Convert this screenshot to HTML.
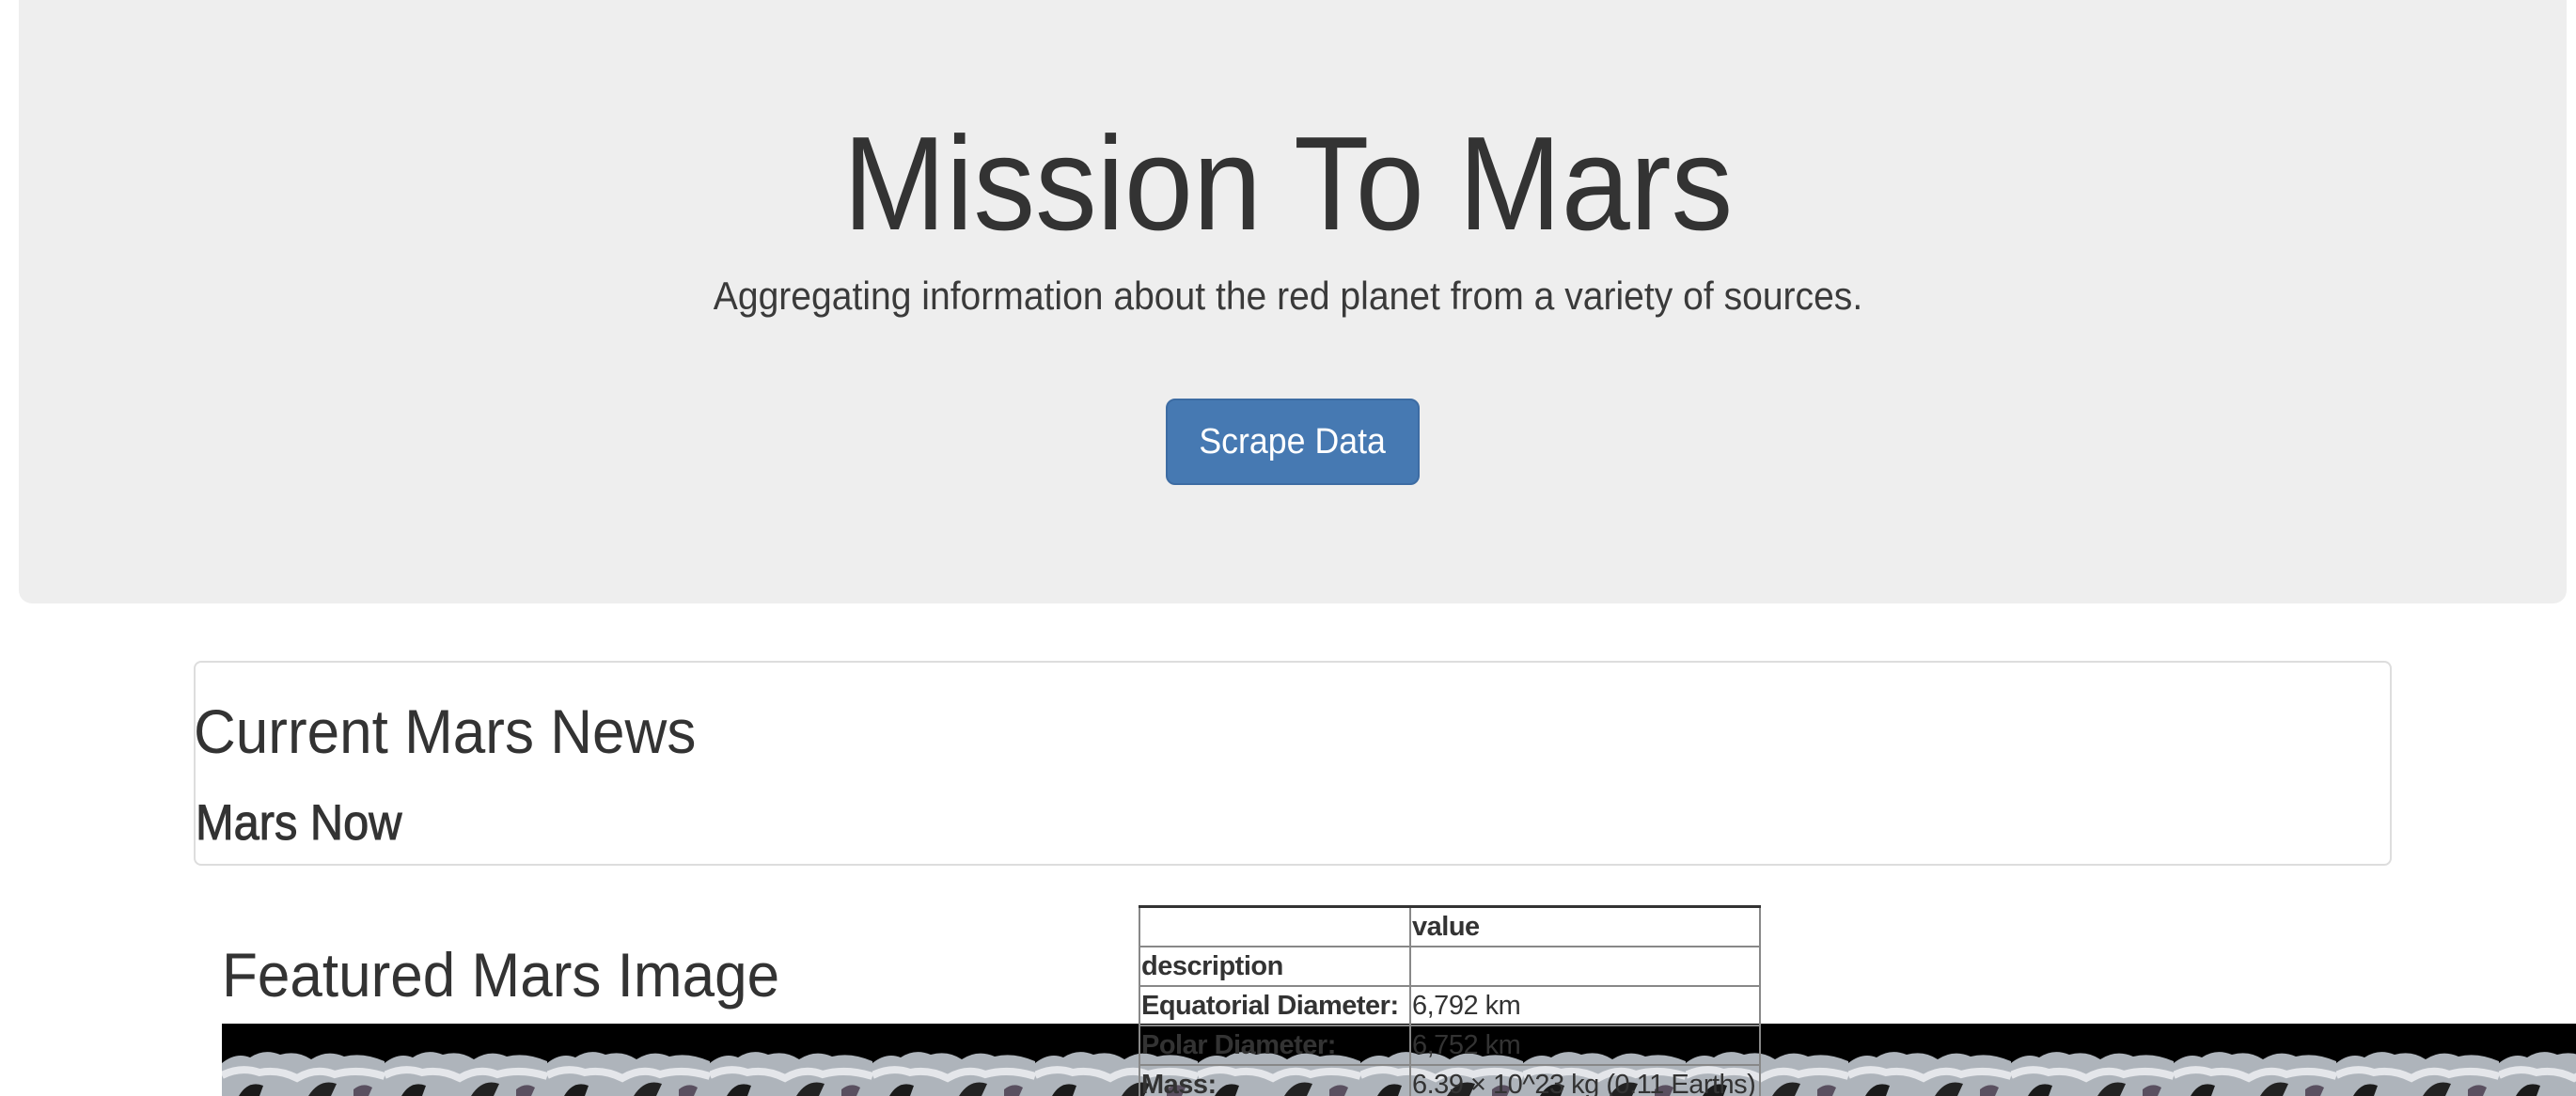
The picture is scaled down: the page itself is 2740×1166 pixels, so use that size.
<!DOCTYPE html>
<html><head><meta charset="utf-8"><style>
html,body{margin:0;padding:0;background:#fff;width:2740px;height:1166px;overflow:hidden;font-family:"Liberation Sans",Helvetica,Arial,sans-serif;color:#333;position:relative}
.jumbo{position:absolute;left:20px;top:-20px;width:2710px;height:662px;background:#eee;border-radius:14px}
h1{position:absolute;left:0;width:2740px;top:116px;margin:0;text-align:center;font-size:142px;font-weight:normal;line-height:160px;transform:scaleX(0.925)}
.sub{position:absolute;left:0;width:2740px;top:288px;text-align:center;font-size:42px;line-height:54px;color:#3a3a3a;transform:scaleX(0.93)}
.btn{position:absolute;left:1240px;top:424px;width:270px;height:92px;box-sizing:border-box;background:#4679b2;border:2px solid #3d6ca3;border-radius:10px;color:#fff;font-size:38px;text-align:center;line-height:88px}
.btn span{display:inline-block;transform:scaleX(0.94)}
.panel{position:absolute;left:206px;top:703px;width:2338px;height:218px;box-sizing:border-box;border:2px solid #ddd;border-radius:8px}
.h2{position:absolute;font-size:66px;line-height:80px;transform:scaleX(0.94);transform-origin:0 50%}
.h3{position:absolute;font-size:53px;line-height:64px;transform:scaleX(0.92);transform-origin:0 50%;-webkit-text-stroke:1px #333}
.img{position:absolute;left:236px;top:1089px;width:2504px;height:77px;background:#000;overflow:hidden}
table{position:absolute;left:1211px;top:963px;border-collapse:collapse;font-size:29px;border:2px solid #333;border-top-width:3px;table-layout:fixed;width:662px}
td,th{border:2px solid #888;padding:0 1px;height:40px;line-height:40px;text-align:left;white-space:nowrap;overflow:hidden;letter-spacing:-0.5px}
th{font-weight:bold}
</style></head><body>
<div class="jumbo"></div>
<h1>Mission To Mars</h1>
<div class="sub">Aggregating information about the red planet from a variety of sources.</div>
<div class="btn"><span>Scrape Data</span></div>
<div class="panel"></div>
<div class="h2" style="left:206px;top:738px">Current Mars News</div>
<div class="h3" style="left:208px;top:844px">Mars Now</div>
<div class="h2" style="left:236px;top:997px">Featured Mars Image</div>
<div class="img"><svg width="2504" height="77" viewBox="0 0 2504 77">
<defs>
<pattern id="p" width="173" height="77" patternUnits="userSpaceOnUse">
<path d="M0 42 Q15 30 30 36 Q45 26 62 33 Q80 28 95 38 Q112 27 130 35 Q150 30 173 40 V77 H0Z" fill="#aeb4bb"/>
<path d="M0 55 Q20 45 40 52 Q60 48 80 58 Q100 46 120 54 Q145 47 173 56" stroke="#e4e6ea" stroke-width="8" fill="none"/>
<path d="M18 77 Q28 60 44 66 L40 77Z" fill="#1a1a1a"/>
<path d="M92 77 Q104 58 122 64 L116 77Z" fill="#222"/>
<path d="M140 70 Q150 62 160 68 L156 77 H140Z" fill="#5a5060"/>
</pattern></defs>
<rect width="2504" height="77" fill="#000"/><rect width="2504" height="77" fill="url(#p)"/></svg></div>
<table>
<colgroup><col style="width:288px"><col></colgroup>
<tr><th></th><th>value</th></tr>
<tr><th>description</th><td></td></tr>
<tr><th>Equatorial Diameter:</th><td>6,792 km</td></tr>
<tr><th>Polar Diameter:</th><td>6,752 km</td></tr>
<tr><th>Mass:</th><td>6.39 × 10^23 kg (0.11 Earths)</td></tr>
</table>
</body></html>
